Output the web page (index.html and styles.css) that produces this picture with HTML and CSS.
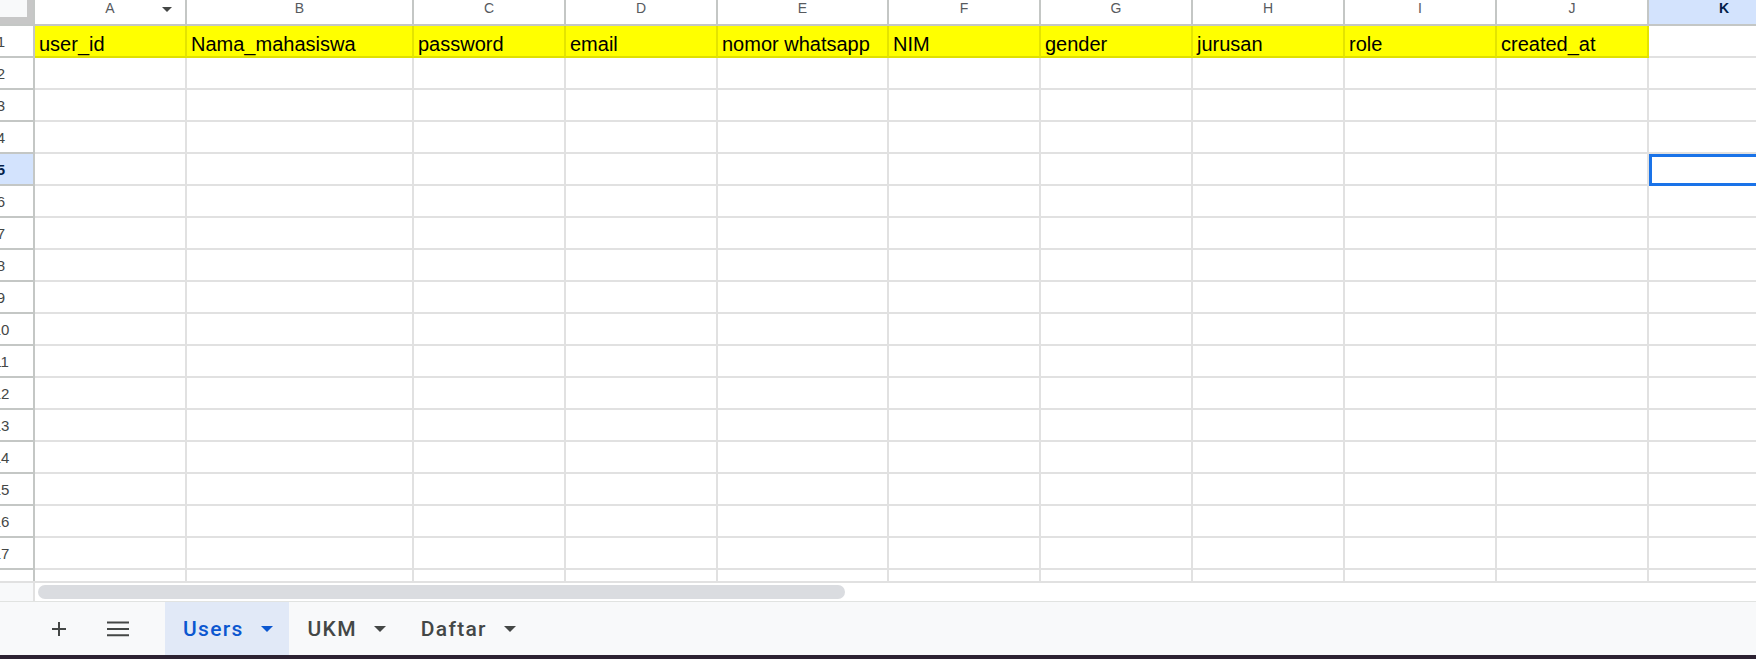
FILE: index.html
```html
<!DOCTYPE html>
<html lang="id">
<head>
<meta charset="utf-8">
<title>Users - Spreadsheet</title>
<link rel="stylesheet" href="styles.css">
</head>
<body>
<div class="app">
  <div class="viewport">
    <div class="sheet">
      <div class="corner"><div class="corner-box"></div></div>
      <div class="ch">A<span class="ch-menu"></span></div>
      <div class="ch">B</div>
      <div class="ch">C</div>
      <div class="ch">D</div>
      <div class="ch">E</div>
      <div class="ch">F</div>
      <div class="ch">G</div>
      <div class="ch">H</div>
      <div class="ch">I</div>
      <div class="ch">J</div>
      <div class="ch ch-active">K</div>

      <div class="rh">1</div><div class="c y">user_id</div><div class="c y">Nama_mahasiswa</div><div class="c y">password</div><div class="c y">email</div><div class="c y">nomor whatsapp</div><div class="c y">NIM</div><div class="c y">gender</div><div class="c y">jurusan</div><div class="c y">role</div><div class="c y">created_at</div><div class="c"></div>
      <div class="rh">2</div><div class="c"></div><div class="c"></div><div class="c"></div><div class="c"></div><div class="c"></div><div class="c"></div><div class="c"></div><div class="c"></div><div class="c"></div><div class="c"></div><div class="c"></div>
      <div class="rh">3</div><div class="c"></div><div class="c"></div><div class="c"></div><div class="c"></div><div class="c"></div><div class="c"></div><div class="c"></div><div class="c"></div><div class="c"></div><div class="c"></div><div class="c"></div>
      <div class="rh">4</div><div class="c"></div><div class="c"></div><div class="c"></div><div class="c"></div><div class="c"></div><div class="c"></div><div class="c"></div><div class="c"></div><div class="c"></div><div class="c"></div><div class="c"></div>
      <div class="rh rh-active">5</div><div class="c"></div><div class="c"></div><div class="c"></div><div class="c"></div><div class="c"></div><div class="c"></div><div class="c"></div><div class="c"></div><div class="c"></div><div class="c"></div><div class="c sel"></div>
      <div class="rh">6</div><div class="c"></div><div class="c"></div><div class="c"></div><div class="c"></div><div class="c"></div><div class="c"></div><div class="c"></div><div class="c"></div><div class="c"></div><div class="c"></div><div class="c"></div>
      <div class="rh">7</div><div class="c"></div><div class="c"></div><div class="c"></div><div class="c"></div><div class="c"></div><div class="c"></div><div class="c"></div><div class="c"></div><div class="c"></div><div class="c"></div><div class="c"></div>
      <div class="rh">8</div><div class="c"></div><div class="c"></div><div class="c"></div><div class="c"></div><div class="c"></div><div class="c"></div><div class="c"></div><div class="c"></div><div class="c"></div><div class="c"></div><div class="c"></div>
      <div class="rh">9</div><div class="c"></div><div class="c"></div><div class="c"></div><div class="c"></div><div class="c"></div><div class="c"></div><div class="c"></div><div class="c"></div><div class="c"></div><div class="c"></div><div class="c"></div>
      <div class="rh">10</div><div class="c"></div><div class="c"></div><div class="c"></div><div class="c"></div><div class="c"></div><div class="c"></div><div class="c"></div><div class="c"></div><div class="c"></div><div class="c"></div><div class="c"></div>
      <div class="rh">11</div><div class="c"></div><div class="c"></div><div class="c"></div><div class="c"></div><div class="c"></div><div class="c"></div><div class="c"></div><div class="c"></div><div class="c"></div><div class="c"></div><div class="c"></div>
      <div class="rh">12</div><div class="c"></div><div class="c"></div><div class="c"></div><div class="c"></div><div class="c"></div><div class="c"></div><div class="c"></div><div class="c"></div><div class="c"></div><div class="c"></div><div class="c"></div>
      <div class="rh">13</div><div class="c"></div><div class="c"></div><div class="c"></div><div class="c"></div><div class="c"></div><div class="c"></div><div class="c"></div><div class="c"></div><div class="c"></div><div class="c"></div><div class="c"></div>
      <div class="rh">14</div><div class="c"></div><div class="c"></div><div class="c"></div><div class="c"></div><div class="c"></div><div class="c"></div><div class="c"></div><div class="c"></div><div class="c"></div><div class="c"></div><div class="c"></div>
      <div class="rh">15</div><div class="c"></div><div class="c"></div><div class="c"></div><div class="c"></div><div class="c"></div><div class="c"></div><div class="c"></div><div class="c"></div><div class="c"></div><div class="c"></div><div class="c"></div>
      <div class="rh">16</div><div class="c"></div><div class="c"></div><div class="c"></div><div class="c"></div><div class="c"></div><div class="c"></div><div class="c"></div><div class="c"></div><div class="c"></div><div class="c"></div><div class="c"></div>
      <div class="rh">17</div><div class="c"></div><div class="c"></div><div class="c"></div><div class="c"></div><div class="c"></div><div class="c"></div><div class="c"></div><div class="c"></div><div class="c"></div><div class="c"></div><div class="c"></div>
      <div class="rh">18</div><div class="c"></div><div class="c"></div><div class="c"></div><div class="c"></div><div class="c"></div><div class="c"></div><div class="c"></div><div class="c"></div><div class="c"></div><div class="c"></div><div class="c"></div>
    </div>
  </div>

  <div class="hscroll">
    <div class="hscroll-corner"></div>
    <div class="hscroll-track"><div class="hscroll-thumb"></div></div>
  </div>

  <div class="tabbar">
    <button class="tb-btn" aria-label="Tambah sheet">
      <svg width="16" height="16" viewBox="0 0 16 16"><path d="M8 1v14M1 8h14" stroke="#444746" stroke-width="2" fill="none"/></svg>
    </button>
    <button class="tb-btn" aria-label="Semua sheet">
      <svg width="22" height="16" viewBox="0 0 22 16"><path d="M0 1.5h22M0 8h22M0 14.2h22" stroke="#444746" stroke-width="2" fill="none"/></svg>
    </button>
    <div class="tabs">
      <div class="tab tab-active"><span class="tab-name">Users</span><span class="tab-arrow"></span></div>
      <div class="tab"><span class="tab-name">UKM</span><span class="tab-arrow"></span></div>
      <div class="tab"><span class="tab-name">Daftar</span><span class="tab-arrow"></span></div>
    </div>
  </div>

  <div class="taskbar"></div>
</div>
</body>
</html>
```

FILE: styles.css
```css
* { box-sizing: border-box; }

html, body {
  margin: 0;
  padding: 0;
  width: 1756px;
  height: 659px;
  overflow: hidden;
  background: #ffffff;
}

body {
  font-family: "Liberation Sans", Arial, sans-serif;
  color: #000;
}

.app {
  display: flex;
  flex-direction: column;
  width: 1756px;
  height: 659px;
}

.viewport {
  height: 581px;
  flex: 0 0 581px;
  overflow: hidden;
}

.sheet {
  display: grid;
  grid-template-columns: 66px 152px 227px 152px 152px 171px 152px 152px 152px 152px 152px 152px;
  grid-template-rows: 26px repeat(18, 32px);
  margin-left: -31px;
  width: 1982px;
}

.sheet > div {
  border-right: 2px solid #e1e1e1;
  border-bottom: 2px solid #e1e1e1;
}

/* corner */
.sheet > .corner {
  background: #c7c7c7;
  border-right-color: #c4c7c5;
  border-bottom-color: #c4c7c5;
}
.corner-box {
  width: 58px;
  height: 17px;
  background: #f8f9fa;
}

/* column headers */
.sheet > .ch {
  position: relative;
  background: #ffffff;
  border-right-color: #c4c7c5;
  border-bottom-color: #c4c7c5;
  font-size: 14px;
  line-height: 17px;
  text-align: center;
  color: #575a5e;
}
.sheet > .ch-active {
  background: #d3e3fd;
  color: #041e49;
  font-weight: bold;
}
.ch-menu {
  position: absolute;
  right: 13px;
  top: 7px;
  width: 0;
  height: 0;
  border-left: 5.5px solid transparent;
  border-right: 5.5px solid transparent;
  border-top: 5.5px solid #444746;
}

/* row headers */
.sheet > .rh {
  background: #ffffff;
  border-right-color: #c4c7c5;
  border-bottom-color: #c4c7c5;
  display: flex;
  align-items: center;
  justify-content: center;
  font-size: 15px;
  color: #444746;
}
.sheet > .rh-active {
  background: #d3e3fd;
  color: #041e49;
  font-weight: bold;
}

/* cells */
.sheet > .c {
  display: flex;
  align-items: flex-end;
  padding: 0 4px;
  font-size: 20px;
  line-height: 23px;
  white-space: nowrap;
  overflow: hidden;
}
.sheet > .y {
  background: #ffff00;
  border-right-color: #e4e400;
  border-bottom-color: #e0e000;
}
.sheet > .sel {
  position: relative;
  overflow: visible;
}
.sel::after {
  content: "";
  position: absolute;
  top: 0;
  left: 0;
  right: -2px;
  bottom: -2px;
  border: 3px solid #1a73e8;
}

/* horizontal scrollbar */
.hscroll {
  flex: 0 0 20px;
  display: flex;
  border-top: 2px solid #e1e1e1;
}
.hscroll-corner {
  width: 35px;
  background: #f8f9fa;
  border-right: 2px solid #e1e1e1;
}
.hscroll-track {
  flex: 1;
  padding: 2px 0 0 3px;
  background: #ffffff;
}
.hscroll-thumb {
  width: 807px;
  height: 14px;
  border-radius: 7px;
  background: #dadce0;
}

/* sheet tab bar */
.tabbar {
  flex: 0 0 54px;
  display: flex;
  align-items: stretch;
  background: #f8f9fa;
  border-top: 1px solid #e1e3e1;
  padding-left: 39px;
  font-family: Roboto, "Noto Sans", sans-serif;
}
.tb-btn {
  width: 40px;
  border: 0;
  padding: 0;
  background: transparent;
  display: flex;
  align-items: center;
  justify-content: center;
}
.tb-btn + .tb-btn {
  margin-left: 19px;
}
.tabs {
  display: flex;
  margin-left: 27px;
}
.tab {
  display: flex;
  align-items: center;
  gap: 17px;
  padding: 0 16px 0 19px;
  color: #444746;
  font-size: 21px;
  font-weight: 500;
  letter-spacing: 1.3px;
}
.tab-active {
  background: #e1e9f7;
  color: #0b57d0;
  padding-left: 18px;
}
.tab-arrow {
  width: 0;
  height: 0;
  border-left: 6px solid transparent;
  border-right: 6px solid transparent;
  border-top: 6px solid #444746;
  margin-top: 1px;
}
.tab-active .tab-arrow {
  border-top-color: #0b57d0;
}

.taskbar {
  flex: 0 0 4px;
  background: #2c2232;
}
```
